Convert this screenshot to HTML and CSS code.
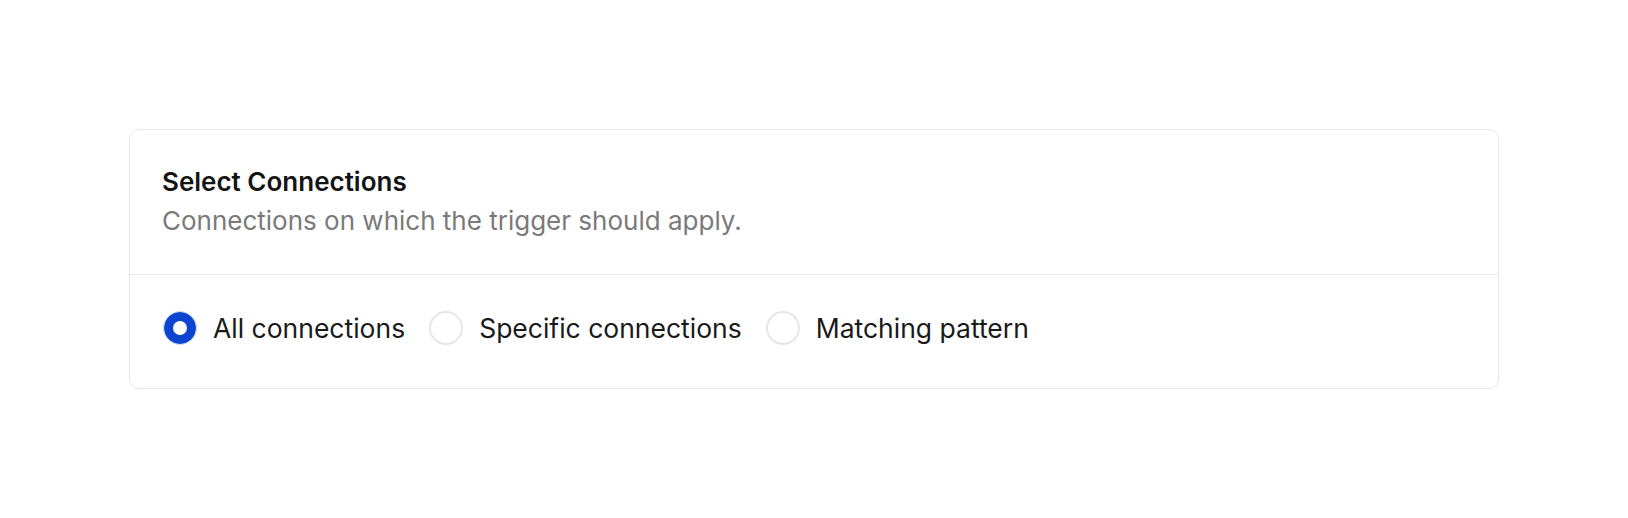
FILE: index.html
```html
<!DOCTYPE html>
<html lang="en">
<head>
    <meta charset="UTF-8">
    <meta name="viewport" content="width=device-width, initial-scale=1.0">
    <title>Trigger Connections</title>
    <link rel="stylesheet" href="styles.css">
</head>
<body>
    <div class="card">
        <div class="card-header">
            <h2 class="card-title">Select Connections</h2>
            <p class="card-desc">Connections on which the trigger should apply.</p>
        </div>
        <div class="options">
            <label class="option">
                <span class="radio checked"></span>
                <span class="option-label">All connections</span>
            </label>
            <label class="option">
                <span class="radio"></span>
                <span class="option-label">Specific connections</span>
            </label>
            <label class="option">
                <span class="radio"></span>
                <span class="option-label">Matching pattern</span>
            </label>
        </div>
    </div>
</body>
</html>
```

FILE: styles.css
```css
body {
    margin: 0;
    padding: 129px;
    background-color: #fff;
    font-family: Inter, "Noto Sans", sans-serif;
    color: #171717;
}
.card {
    border: 1px solid #e6e6e6;
    border-radius: 10px;
    background-color: #fff;
}
.card-header {
    padding: 36px 32px 37px;
    border-bottom: 1px solid #e8e8e8;
}
.card-title {
    margin: 0;
    font-size: 26px;
    line-height: 32px;
    font-weight: 600;
    color: #141414;
}
.card-desc {
    margin: 7px 0 0;
    font-size: 26px;
    line-height: 32px;
    color: #7a7a7a;
}
.options {
    display: flex;
    align-items: center;
    gap: 24px;
    padding: 36px 33px 43px;
}
.option {
    display: flex;
    align-items: center;
    gap: 16px;
    cursor: pointer;
}
.radio {
    width: 34px;
    height: 34px;
    box-sizing: border-box;
    border-radius: 50%;
    border: 2px solid #e6e6e6;
    background-color: #fff;
}
.radio.checked {
    border: 1px solid #c6d4f6;
    box-shadow: inset 0 0 0 9px #0a44d0;
}
.option-label {
    font-size: 26.5px;
    line-height: 34px;
    color: #1a1a1a;
}
```
